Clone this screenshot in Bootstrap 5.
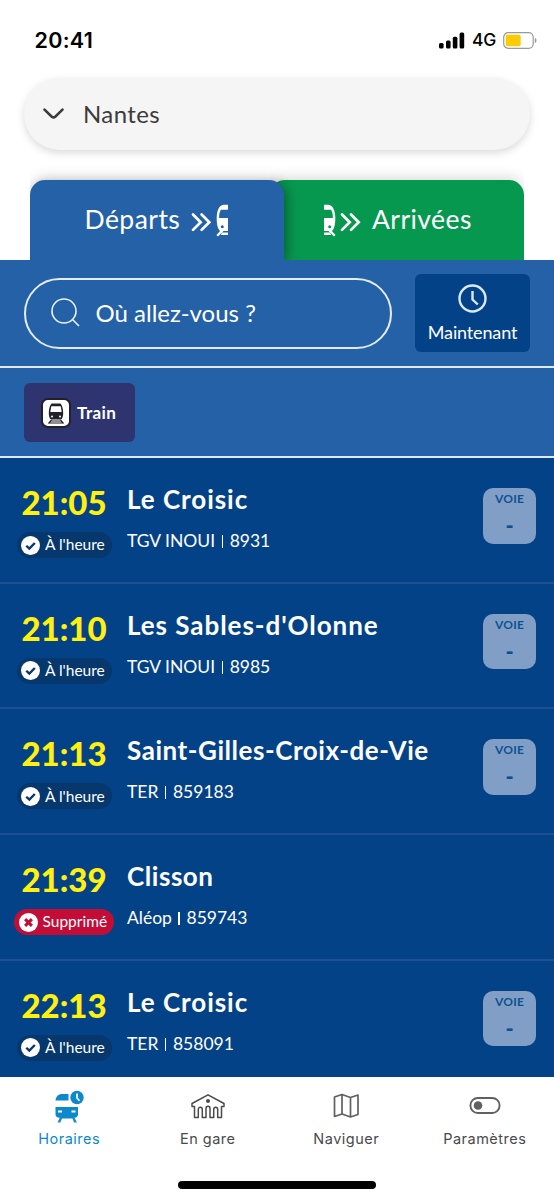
<!DOCTYPE html>
<html lang="fr">
<head>
<meta charset="utf-8">
<meta name="viewport" content="width=device-width, initial-scale=1">
<title>Gare de Nantes – Départs</title>
<link href="https://cdn.jsdelivr.net/npm/bootstrap@5.3.0/dist/css/bootstrap.min.css" rel="stylesheet">
<style>
  body { width: 554px; height: 1200px; overflow: hidden; background: #fff; font-family: Lato, "Noto Sans", sans-serif; }
  svg { display: block; flex: none; }
  .text-line { white-space: nowrap; }
  .status { height: 78px; padding: 3px 17px 0 34.5px; font-family: Inter, "Liberation Sans", sans-serif; color: #000; }
  .clock { font-size: 21.5px; font-weight: 600; letter-spacing: .3px; }
  .network { font-size: 17.5px; letter-spacing: -.3px; margin: 0 7px 0 7px; font-weight: 500; }
  .station { height: 72px; margin: 0 24px; padding-left: 19px; border-radius: 36px; background: #f5f5f5; color: #3c3a3b; box-shadow: 0 3px 9px rgba(0,0,0,.15); }
  .station .text-line { font-size: 24px; margin-left: 19px; letter-spacing: .4px; }
  .tabs { height: 80px; margin: 30px 30px 0; }
  .tab { height: 80px; border-radius: 15px 15px 0 0; color: #fff; font-size: 26.5px; letter-spacing: .45px; }
  .tab-dep { width: 254px; background: #2561a6; z-index: 2; padding-left: 54.5px; box-shadow: 0 -4px 14px -2px rgba(0,0,0,.16), 3px 4px 12px rgba(0,0,0,.3); clip-path: inset(-30px -30px 0 0); }
  .tab-arr { width: 254px; margin-left: -14px; background: #079850; padding-left: 54px; box-shadow: 0 -4px 14px -2px rgba(0,0,0,.16); clip-path: inset(-30px 0 0 0); }
  .panel { position: relative; z-index: 3; background: #2561a6; color: #fff; }
  .search-row { height: 108px; padding: 18px 24px 0; border-bottom: 2px solid #dfe9f5; }
  .search { width: 368px; height: 71px; border: 2px solid #e3ecf7; padding: 0 0 2px 25px; }
  .search .text-line { font-size: 24px; margin-left: 15.5px; letter-spacing: 0; }
  .now { width: 115px; height: 78px; margin-top: -4px; border-radius: 6px; background: #044288; padding-top: 10px; }
  .now .text-line { font-size: 18px; line-height: 24px; margin-top: 7px; letter-spacing: -.15px; }
  .filter-row { height: 90px; padding: 15px 24px 0; border-bottom: 2px solid #dfe9f5; }
  .mode { width: 110.5px; height: 59px; border-radius: 6px; background: #2e3470; padding-left: 17px; font-size: 17px; font-weight: 700; letter-spacing: .4px; }
  .mode .text-line { margin-left: 6px; }
  .board { height: 619px; overflow: hidden; background: #044287; color: #fff; }
  .train { height: 125.7px; padding: 0 18px 0 14px; border-bottom: 2px solid #1c5093; }
  .when { width: 100px; padding-top: 23px; }
  .hour { font-size: 33px; line-height: 42px; font-weight: 900; color: #fff00f; }
  .state { height: 26px; width: 95px; margin-top: 9px; padding-left: 4.5px; background: #06376d; font-size: 15.5px; letter-spacing: 0; }
  .state span { margin-left: 5px; }
  .state.cancelled { width: 100px; background: #c30d37; }
  .where { margin-left: 13px; padding-top: 24px; }
  .dest { font-size: 26px; line-height: 34px; font-weight: 700; letter-spacing: .55px; }
  .dest.wide { letter-spacing: .95px; }
  .service { font-size: 17.5px; line-height: 24px; margin-top: 13px; }
  .sep { display: inline-block; width: 1.6px; height: 13px; margin: 0 2px; background: currentColor; vertical-align: -1px; }
  .platform { width: 53px; height: 55.5px; margin-top: 30px; border-radius: 10px; background: #819fc6; color: #0c5291; font-weight: 700; }
  .platform .lbl { font-size: 12px; line-height: 14px; padding-top: 4px; letter-spacing: .2px; }
  .platform .num { font-size: 22px; line-height: 28px; margin-top: 6px; font-weight: 900; }
  .bottom { height: 107px; padding-top: 12px; font-family: Inter, "Liberation Sans", sans-serif; font-size: 14.5px; color: #4a4a4a; }
  .bottom .text-line { line-height: 20px; margin-top: 6px; letter-spacing: .5px; }
  .bottom svg { height: 34px; }
  .bottom .current { color: #0d88cb; }
  .home { width: 198px; height: 7.5px; background: #000; margin-top: -3px; }
</style>
</head>
<body>
<svg class="d-none">
  <symbol id="ok" viewBox="0 0 18 18"><circle cx="9" cy="9" r="9" fill="#fff"/><path d="M5 9.2l2.900 2.800 5.200-5.400" fill="none" stroke="#06376d" stroke-width="2.200"/></symbol>
  <symbol id="ko" viewBox="0 0 18 18"><circle cx="9" cy="9" r="9" fill="#fff"/><path d="M5.800 5.800l6.400 6.400M12.200 5.800l-6.400 6.400" stroke="#c30d37" stroke-width="2.800"/></symbol>
  <symbol id="half-train" viewBox="0 0 13 33"><path d="M12 .8v5H5C3.500 8 3 11 3.200 14H12v13H7.500L2 32.500.4 31 4 27.300C1.200 24 .5 19 .7 13 1 6 3.500.8 8 .8zM6 28.600h6v2.400H5z" fill="#fff"/><circle cx="6.300" cy="22.800" r="1.500" fill="var(--bg)"/></symbol>
</svg>

<header class="status d-flex align-items-center justify-content-between">
  <div class="clock text-line">20:41</div>
  <div class="d-flex align-items-center">
    <svg width="26" height="17" viewBox="0 0 26 17"><rect x="0" y="11" width="4.600" height="5.500" rx="1.500"/><rect x="7" y="8.500" width="4.600" height="8" rx="1.500"/><rect x="13.800" y="4.800" width="4.600" height="11.700" rx="1.500"/><rect x="20.600" y=".5" width="4.600" height="16" rx="1.500"/></svg>
    <div class="network text-line">4G</div>
    <svg width="34" height="17" viewBox="0 0 34 17"><rect x=".7" y=".7" width="29.500" height="15.600" rx="4.500" fill="none" stroke="#999" stroke-width="1.200"/><rect x="2.700" y="2.700" width="15" height="11.600" rx="2" fill="#fbcb05"/><path d="M31.800 5.800c2.200.8 2.200 4.600 0 5.400z" fill="#999"/></svg>
  </div>
</header>

<div class="station d-flex align-items-center">
  <svg width="21" height="12" viewBox="0 0 21 12"><path d="M1.500 1.600l7.300 7.100q1.700 1.400 3.400 0l7.300-7.100" fill="none" stroke="#3c3a3b" stroke-width="2.600" stroke-linecap="round"/></svg>
  <div class="text-line">Nantes</div>
</div>

<nav class="tabs d-flex">
  <div class="tab tab-dep position-relative d-flex align-items-center">
    <span class="text-line">Départs</span>
    <svg style="--bg:#2561a6" class="ms-2" width="44" height="33" viewBox="0 0 44 33"><path d="M5 10.500l7.700 7.700-7.700 7.700M13.600 10.500l7.700 7.700-7.700 7.700" fill="none" stroke="#fff" stroke-width="2.700" stroke-linecap="round"/><use href="#half-train" x="28" y="0" width="13" height="33"/></svg>
  </div>
  <div class="tab tab-arr d-flex align-items-center">
    <svg style="--bg:#079850" width="40" height="33" viewBox="0 0 40 33"><use href="#half-train" width="13" height="33" transform="translate(12 0) scale(-1 1)"/><path d="M18 10.500l7.700 7.700-7.700 7.700M27 10.500l7.700 7.700-7.700 7.700" fill="none" stroke="#fff" stroke-width="2.700" stroke-linecap="round"/></svg>
    <span class="text-line ms-2">Arrivées</span>
  </div>
</nav>

<section class="panel">
  <div class="search-row d-flex justify-content-between">
    <div class="search rounded-pill d-flex align-items-center">
      <svg width="29" height="29" viewBox="0 0 29 29"><g fill="none" stroke="#eaf2fb" stroke-width="1.600"><circle cx="13" cy="13" r="12"/><path d="M21.500 21.500l6.500 6.500"/></g></svg>
      <div class="text-line">Où allez-vous ?</div>
    </div>
    <div class="now d-flex flex-column align-items-center">
      <svg width="29" height="29" viewBox="0 0 29 29"><g fill="none" stroke="#d9e9fa" stroke-width="2.400"><circle cx="14.500" cy="14.500" r="13"/><path d="M14.500 7v8.500l5.300 5"/></g></svg>
      <div class="text-line">Maintenant</div>
    </div>
  </div>
  <div class="filter-row">
    <div class="mode d-flex align-items-center">
      <svg width="30" height="30" viewBox="0 0 30 30"><rect x="1" y="1" width="28" height="28" rx="6" fill="#fff" stroke="#222029" stroke-width="2"/><path d="M10.500 5.500h9c1.500 1.500 2.700 5 2.700 9.500 0 3-.5 5-2 6.500h-10.400c-1.500-1.500-2-3.500-2-6.500 0-4.500 1.200-8 2.700-9.500z" fill="#222029"/><path d="M10.300 8.300h9.400l1 5.700H9.300z" fill="#fff"/><circle cx="11" cy="18.500" r="1" fill="#fff"/><circle cx="19" cy="18.500" r="1" fill="#fff"/><path d="M10.500 22L7.500 25.500M19.500 22l3 3.500M9.500 23h11M8 25h14" stroke="#222029" stroke-width="1.200"/></svg>
      <span class="text-line">Train</span>
    </div>
  </div>
</section>

<main class="board">
  <article class="train d-flex">
    <div class="when d-flex flex-column align-items-center"><div class="hour text-line">21:05</div><div class="state rounded-pill d-flex align-items-center text-line"><svg width="19" height="19"><use href="#ok"/></svg><span>À l'heure</span></div></div>
    <div class="where flex-grow-1"><div class="dest wide text-line">Le Croisic</div><div class="service text-line">TGV INOUI <i class="sep"></i> 8931</div></div>
    <div class="platform text-center"><div class="lbl">VOIE</div><div class="num">-</div></div>
  </article>
  <article class="train d-flex">
    <div class="when d-flex flex-column align-items-center"><div class="hour text-line">21:10</div><div class="state rounded-pill d-flex align-items-center text-line"><svg width="19" height="19"><use href="#ok"/></svg><span>À l'heure</span></div></div>
    <div class="where flex-grow-1"><div class="dest wide text-line">Les Sables-d'Olonne</div><div class="service text-line">TGV INOUI <i class="sep"></i> 8985</div></div>
    <div class="platform text-center"><div class="lbl">VOIE</div><div class="num">-</div></div>
  </article>
  <article class="train d-flex">
    <div class="when d-flex flex-column align-items-center"><div class="hour text-line">21:13</div><div class="state rounded-pill d-flex align-items-center text-line"><svg width="19" height="19"><use href="#ok"/></svg><span>À l'heure</span></div></div>
    <div class="where flex-grow-1"><div class="dest text-line">Saint-Gilles-Croix-de-Vie</div><div class="service text-line">TER <i class="sep"></i> 859183</div></div>
    <div class="platform text-center"><div class="lbl">VOIE</div><div class="num">-</div></div>
  </article>
  <article class="train d-flex">
    <div class="when d-flex flex-column align-items-center"><div class="hour text-line">21:39</div><div class="state cancelled rounded-pill d-flex align-items-center text-line"><svg width="19" height="19"><use href="#ko"/></svg><span>Supprimé</span></div></div>
    <div class="where flex-grow-1"><div class="dest text-line">Clisson</div><div class="service text-line">Aléop <i class="sep"></i> 859743</div></div>
  </article>
  <article class="train d-flex">
    <div class="when d-flex flex-column align-items-center"><div class="hour text-line">22:13</div><div class="state rounded-pill d-flex align-items-center text-line"><svg width="19" height="19"><use href="#ok"/></svg><span>À l'heure</span></div></div>
    <div class="where flex-grow-1"><div class="dest wide text-line">Le Croisic</div><div class="service text-line">TER <i class="sep"></i> 858091</div></div>
    <div class="platform text-center"><div class="lbl">VOIE</div><div class="num">-</div></div>
  </article>
</main>

<nav class="bottom row g-0 text-center">
  <div class="col current d-flex flex-column align-items-center">
    <svg width="36" height="34" viewBox="0 0 36 34"><g fill="currentColor"><path d="M4.500 11.500c.5-4 2.500-6.500 7-6.500h6v6.500z"/><path d="M4.500 18h22.500v7c0 2.500-1.200 3.800-3.500 3.800l2.300 4.800h-2.700L21.500 29.500H11l-1.700 4.100H6.600L8.800 28.800C5.800 28.800 4.500 27.500 4.500 25z"/><circle cx="26" cy="8.500" r="6.700"/></g><path d="M7 22.500h4M20.500 22.500h4" stroke="#fff" stroke-width="2"/><path d="M26 4.500v4.500l2.500 2.800" fill="none" stroke="#fff" stroke-width="1.700"/></svg>
    <div class="text-line">Horaires</div>
  </div>
  <div class="col d-flex flex-column align-items-center">
    <svg width="36" height="34" viewBox="0 0 36 34"><g fill="none" stroke="currentColor" stroke-width="1.500" stroke-linejoin="round"><path d="M4.500 28.500V17.500H2V14.500L18 5.800 34 14.500v3H31.500v11h-3.800V20.500c0-3-4-3-4 0v8H20v-9c0-3-4-3-4 0v9H12.300v-8c0-3-4-3-4 0v8z"/></g><circle cx="18" cy="12" r="2" fill="currentColor"/></svg>
    <div class="text-line">En gare</div>
  </div>
  <div class="col d-flex flex-column align-items-center">
    <svg width="36" height="34" viewBox="0 0 36 34"><g fill="none" stroke="#606060" stroke-width="1.700" stroke-linejoin="round"><path d="M6.500 8l7.500-2.500 8.500 3 7.500-2.500v19.500l-7.500 2.500-8.500-3-7.500 2.500zM14 5.500V25M22.500 8.500V28"/></g></svg>
    <div class="text-line">Naviguer</div>
  </div>
  <div class="col d-flex flex-column align-items-center">
    <svg width="36" height="34" viewBox="0 0 36 34"><rect x="3.400" y="9" width="29.200" height="15" rx="7.500" fill="none" stroke="#606060" stroke-width="1.900"/><circle cx="11" cy="16.500" r="4.300" fill="#606060"/></svg>
    <div class="text-line">Paramètres</div>
  </div>
</nav>
<div class="home rounded-pill mx-auto"></div>
<script src="https://cdn.jsdelivr.net/npm/bootstrap@5.3.0/dist/js/bootstrap.bundle.min.js"></script>
</body>
</html>
